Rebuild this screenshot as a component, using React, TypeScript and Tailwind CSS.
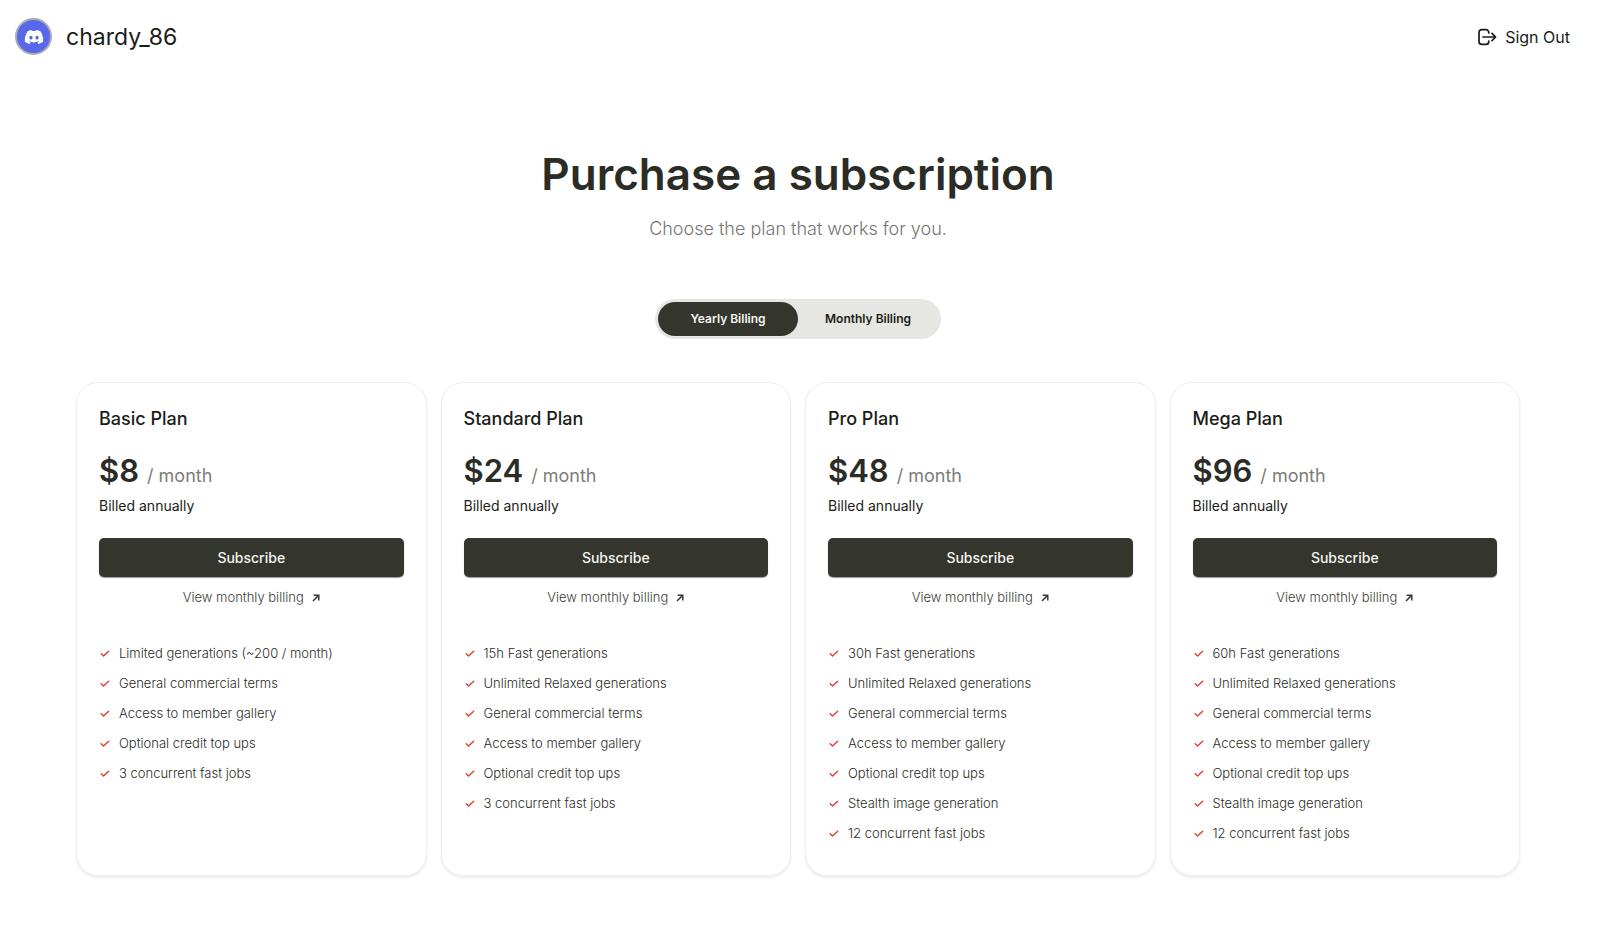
import { useState } from 'react'
import { FaDiscord } from 'react-icons/fa'

interface Plan {
  name: string
  price: number
  features: string[]
}

const plans: Plan[] = [
  {
    name: 'Basic Plan',
    price: 8,
    features: [
      'Limited generations (~200 / month)',
      'General commercial terms',
      'Access to member gallery',
      'Optional credit top ups',
      '3 concurrent fast jobs',
    ],
  },
  {
    name: 'Standard Plan',
    price: 24,
    features: [
      '15h Fast generations',
      'Unlimited Relaxed generations',
      'General commercial terms',
      'Access to member gallery',
      'Optional credit top ups',
      '3 concurrent fast jobs',
    ],
  },
  {
    name: 'Pro Plan',
    price: 48,
    features: [
      '30h Fast generations',
      'Unlimited Relaxed generations',
      'General commercial terms',
      'Access to member gallery',
      'Optional credit top ups',
      'Stealth image generation',
      '12 concurrent fast jobs',
    ],
  },
  {
    name: 'Mega Plan',
    price: 96,
    features: [
      '60h Fast generations',
      'Unlimited Relaxed generations',
      'General commercial terms',
      'Access to member gallery',
      'Optional credit top ups',
      'Stealth image generation',
      '12 concurrent fast jobs',
    ],
  },
]

function SignOutIcon() {
  return (
    <svg width="20" height="18" viewBox="0 0 20 18" fill="none" stroke="currentColor" strokeWidth="1.7" strokeLinecap="round" strokeLinejoin="round">
      <path d="M11.8 5V4.6a3 3 0 0 0-3-3H5a3 3 0 0 0-3 3v8.8a3 3 0 0 0 3 3h3.8a3 3 0 0 0 3-3V13" />
      <path d="M6 9h12.4M15 5.4 18.6 9 15 12.6" />
    </svg>
  )
}

function CheckIcon() {
  return (
    <svg width="12" height="20" viewBox="0 0 12 20" fill="none" stroke="#e23b30" strokeWidth="1.4" strokeLinecap="round" strokeLinejoin="round">
      <path d="m2.2 10.8 2.3 2.1 5.2-4.7" />
    </svg>
  )
}

function ArrowUpRightIcon() {
  return (
    <svg width="8" height="8" viewBox="0 0 8 8" fill="none" stroke="currentColor" strokeWidth="1.5">
      <path d="M1 7 6.6 1.4M1.6 1.2h5.2v5.2" />
    </svg>
  )
}

function PlanCard({ plan, yearly, onToggle }: { plan: Plan; yearly: boolean; onToggle: () => void }) {
  return (
    <section className="rounded-[22px] border border-[#efefed] bg-white px-[22px] pt-6 pb-8 shadow-[0_2px_3px_rgba(0,0,0,0.08)]">
      <h2 className="text-lg leading-6 font-medium text-[#1b1c17]">{plan.name}</h2>
      <p className="mt-5 flex items-baseline gap-2 leading-10">
        <span className="text-[31px] font-semibold text-[#2b2c25]">${plan.price}</span>
        <span className="text-lg leading-6 text-[#7c7c78]">/ month</span>
      </p>
      <p className="mt-[5px] text-sm text-[#1b1c17]">Billed annually</p>
      <button className="mt-[22px] h-[39px] w-full rounded-[5px] bg-[#34362d] text-sm font-medium text-[#f4f4f0] shadow-[0_1px_1px_rgba(0,0,0,0.4)]">
        Subscribe
      </button>
      <button onClick={onToggle} className="mt-[9px] flex h-6 w-full items-center justify-center gap-2 text-[13px] font-light text-[#3b3c35]">
        View {yearly ? 'monthly' : 'yearly'} billing
        <ArrowUpRightIcon />
      </button>
      <ul className="mt-[33px] flex flex-col gap-[10px] text-[13px] leading-5 font-light text-[#2b2c25]">
        {plan.features.map((feature) => (
          <li key={feature} className="flex gap-2">
            <CheckIcon />
            {feature}
          </li>
        ))}
      </ul>
    </section>
  )
}

export default function App() {
  const [yearly, setYearly] = useState(true)

  return (
    <div className="min-h-screen bg-white font-['Inter',sans-serif] text-[#1b1c17]">
      <header className="flex items-center justify-between pt-[18px] pr-[30px] pl-[15px]">
        <div className="flex items-center gap-[14px]">
          <span className="flex size-[37px] items-center justify-center rounded-full border-2 border-[#a9abb5] bg-[#5768ea]">
            <FaDiscord className="size-5 text-white" />
          </span>
          <span className="text-[23px] leading-8">chardy_86</span>
        </div>
        <button className="flex items-center gap-2 text-base">
          <SignOutIcon />
          Sign Out
        </button>
      </header>

      <main className="pt-[93px] pr-20 pb-16 pl-[76px]">
        <div className="flex flex-col items-center">
          <h1 className="text-[44px] leading-[52px] font-semibold text-[#2b2c25]">Purchase a subscription</h1>
          <p className="mt-[17px] text-lg leading-6 font-light text-[#74756f]">Choose the plan that works for you.</p>
          <div className="mt-[58px] flex rounded-full bg-[#e6e7e2] p-[3px] text-xs font-semibold">
            <button
              onClick={() => setYearly(true)}
              className={`h-[34px] w-[140px] rounded-full ${yearly ? 'bg-[#34362d] text-[#f4f4f0]' : ''}`}
            >
              Yearly Billing
            </button>
            <button
              onClick={() => setYearly(false)}
              className={`h-[34px] w-[140px] rounded-full ${yearly ? '' : 'bg-[#34362d] text-[#f4f4f0]'}`}
            >
              Monthly Billing
            </button>
          </div>
        </div>

        <div className="mt-[43px] grid grid-cols-4 gap-[14px]">
          {plans.map((plan) => (
            <PlanCard key={plan.name} plan={plan} yearly={yearly} onToggle={() => setYearly(!yearly)} />
          ))}
        </div>
      </main>
    </div>
  )
}
